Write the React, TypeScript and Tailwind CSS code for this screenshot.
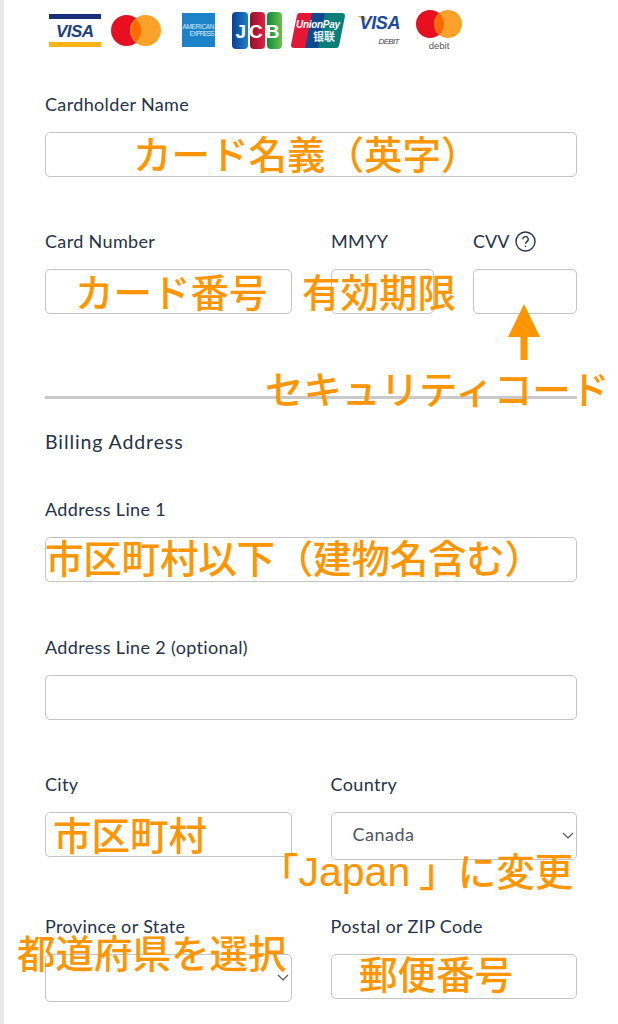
const labelFont = "font-['Lato','Noto_Sans',sans-serif]";
const noteFont = "font-['Noto_Sans_CJK_JP','Noto_Sans',sans-serif]";

function Label({ children }: { children: React.ReactNode }) {
  return <label className={`block h-[24px] text-[18px] leading-[24px] tracking-[0.35px] text-[#24324a] ${labelFont}`}>{children}</label>;
}

function Field({ label, className = '' }: { label: React.ReactNode; className?: string }) {
  return (
    <div className={className}>
      <Label>{label}</Label>
      <input type="text" className="mt-[16px] block h-[45px] w-full rounded-[5px] border border-[#c4c4c4] bg-white" />
    </div>
  );
}

function SelectField({ label, value }: { label: string; value?: string }) {
  return (
    <div>
      <Label>{label}</Label>
      <div className="relative mt-[16px] flex h-[48px] w-full items-center rounded-[5px] border border-[#c4c4c4] bg-white pb-[4px] pl-[21px]">
        <span className={`text-[18px] tracking-[0.5px] text-[#4b5563] ${labelFont}`}>{value}</span>
        <svg className="absolute right-[2px] top-[19px]" width="12" height="8" viewBox="0 0 12 8" fill="none" stroke="#555" strokeWidth="1.2">
          <path d="M1 1l5 5 5-5" />
        </svg>
      </div>
    </div>
  );
}

function Note({ children, className }: { children: React.ReactNode; className: string }) {
  return <span className={`absolute whitespace-nowrap text-[38.5px] leading-[44px] font-medium text-[#ff9500] ${noteFont} ${className}`}>{children}</span>;
}

function VisaLogo() {
  return (
    <svg width="52" height="33" viewBox="0 0 52 33">
      <rect width="52" height="5" fill="#1a2f7a" />
      <rect y="28" width="52" height="5" fill="#fbb416" />
      <text x="26" y="23" textAnchor="middle" fontFamily="Liberation Sans" fontWeight="700" fontStyle="italic" fontSize="17" textLength="38" fill="#1c3f7c">VISA</text>
    </svg>
  );
}

function McLogo() {
  return (
    <svg width="50" height="31" viewBox="0 0 50 31">
      <circle cx="15.5" cy="15.5" r="15.5" fill="#e80f20" />
      <circle cx="34.5" cy="15.5" r="15.5" fill="#fca22b" />
      <path d="M25 4a15.5 15.5 0 0 1 0 23a15.5 15.5 0 0 1 0-23z" fill="#ff6a00" />
    </svg>
  );
}

function McDebitLogo() {
  return (
    <svg width="46" height="40" viewBox="0 0 46 40">
      <circle cx="14" cy="14" r="14" fill="#e80f20" />
      <circle cx="32" cy="14" r="14" fill="#fca22b" />
      <path d="M23 3.2a14 14 0 0 1 0 21.6a14 14 0 0 1 0-21.6z" fill="#ff6a00" />
      <text x="23" y="38.5" textAnchor="middle" fontFamily="Liberation Sans" fontSize="9.5" fill="#555">debit</text>
    </svg>
  );
}

function AmexLogo() {
  return (
    <svg width="33" height="34" viewBox="0 0 33 34">
      <rect width="33" height="34" fill="#1d82c8" />
      <text x="16.5" y="16" textAnchor="middle" fontFamily="Liberation Sans" fontSize="6.5" textLength="32" fill="#d8edf9">AMERICAN</text>
      <text x="20" y="23" textAnchor="middle" fontFamily="Liberation Sans" fontSize="6.5" textLength="25" fill="#d8edf9">EXPRESS</text>
    </svg>
  );
}

function JcbLogo() {
  return (
    <svg width="50" height="37" viewBox="0 0 50 37">
      <defs>
        <linearGradient id="jcb-blue" x1="0" x2="1" y1="0" y2="0">
          <stop offset="0" stopColor="#0b3f96" />
          <stop offset="1" stopColor="#1e7fc4" />
        </linearGradient>
        <linearGradient id="jcb-red" x1="0" x2="1" y1="0" y2="0">
          <stop offset="0" stopColor="#8f1030" />
          <stop offset="1" stopColor="#e4203c" />
        </linearGradient>
        <linearGradient id="jcb-green" x1="0" x2="1" y1="0" y2="0">
          <stop offset="0" stopColor="#0e8a3c" />
          <stop offset="1" stopColor="#6cc04a" />
        </linearGradient>
      </defs>
      <rect width="16" height="37" rx="4" fill="url(#jcb-blue)" />
      <rect x="18" width="15" height="37" rx="4" fill="url(#jcb-red)" />
      <rect x="35" width="15" height="37" rx="4" fill="url(#jcb-green)" />
      <text x="25.5" y="26" textAnchor="middle" fontFamily="Liberation Sans" fontWeight="700" fontSize="19" textLength="44" fill="#fff">JCB</text>
    </svg>
  );
}

function UnionPayLogo() {
  return (
    <svg width="54" height="35" viewBox="0 0 54 35">
      <path d="M9 0h20l-7 35H3a3 3 0 0 1-3-3L6 2a3 3 0 0 1 3-2z" fill="#e31837" />
      <path d="M21 0h20l-7 35H14z" fill="#0b4a8f" />
      <path d="M34 0h17a3 3 0 0 1 3 3l-6 30a3 3 0 0 1-3 2H27z" fill="#0a7f7a" />
      <text x="27" y="15" textAnchor="middle" fontFamily="Liberation Sans" fontWeight="700" fontStyle="italic" fontSize="10" textLength="44" fill="#fff">UnionPay</text>
      <text x="33" y="28" textAnchor="middle" fontFamily="Noto Sans CJK SC" fontWeight="700" fontSize="11" fill="#e6f2f5">银联</text>
    </svg>
  );
}

function VisaDebitLogo() {
  return (
    <svg width="44" height="33" viewBox="0 0 44 33">
      <path d="M0 2h7l3 5z" fill="#f5a623" />
      <text x="23" y="15" textAnchor="middle" fontFamily="Liberation Sans" fontWeight="700" fontStyle="italic" fontSize="18" textLength="41" fill="#1a4a9c">VISA</text>
      <text x="32" y="30" textAnchor="middle" fontFamily="Liberation Sans" fontStyle="italic" fontSize="8" textLength="21" fill="#444">DEBIT</text>
    </svg>
  );
}

export default function App() {
  return (
    <div className="relative h-[1024px] w-[618px] overflow-hidden border-l-4 border-[#e8e8e8] bg-white">
      <div className="ml-[41px] w-[532px] pt-[10px]">
        <div className="flex h-[40px] items-center pl-[4px]">
          <VisaLogo />
          <div className="ml-[10px]"><McLogo /></div>
          <div className="ml-[21px]"><AmexLogo /></div>
          <div className="ml-[17px]"><JcbLogo /></div>
          <div className="ml-[9px]"><UnionPayLogo /></div>
          <div className="ml-[12px]"><VisaDebitLogo /></div>
          <div className="ml-[15px]"><McDebitLogo /></div>
        </div>

        <Field label="Cardholder Name" className="mt-[42px]" />

        <div className="mt-[52px] grid grid-cols-[247px_103px_104px] gap-x-[39px]">
          <Field label="Card Number" />
          <Field label="MMYY" />
          <Field
            label={
              <span className="flex items-center gap-[6px] tracking-normal">
                CVV
                <svg width="21" height="21" viewBox="0 0 21 21" fill="none" stroke="#24324a" strokeWidth="1.4">
                  <circle cx="10.5" cy="10.5" r="9.5" />
                  <path d="M7.8 8.2a2.7 2.7 0 1 1 4 2.4c-.9.6-1.3 1.1-1.3 2.1" />
                  <path d="M10.5 14.6v1.4" />
                </svg>
              </span>
            }
          />
        </div>

        <hr className="mt-[82px] h-[3px] border-0 bg-[#c9c9c9]" />

        <div className={`mt-[31px] h-[24px] text-[19.5px] leading-[24px] tracking-[0.9px] text-[#24324a] ${labelFont}`}>Billing Address</div>

        <Field label="Address Line 1" className="mt-[43px]" />
        <Field label="Address Line 2 (optional)" className="mt-[53px]" />

        <div className="mt-[52px] grid grid-cols-2 gap-x-[39px]">
          <Field label="City" />
          <SelectField label="Country" value="Canada" />
        </div>

        <div className="mt-[54px] grid grid-cols-2 gap-x-[39px]">
          <SelectField label="Province or State" />
          <Field label="Postal or ZIP Code" />
        </div>
      </div>

      {/* 注釈 */}
      <Note className="left-[129px] top-[130px]">カード名義（英字）</Note>
      <Note className="left-[71px] top-[268px]">カード番号</Note>
      <Note className="left-[298px] top-[268px]">有効期限</Note>
      <Note className="left-[261px] top-[365px]">セキュリティコード</Note>
      <Note className="left-[41px] top-[534px] tracking-[-0.2px]">市区町村以下（建物名含む）</Note>
      <Note className="left-[49px] top-[811px]">市区町村</Note>
      <Note className="left-[256px] top-[847px]">
        「<span className="mr-[9px] text-[41px] font-normal font-['Liberation_Sans']">Japan</span>」に変更
      </Note>
      <Note className="left-[13px] top-[929px]">都道府県を選択</Note>
      <Note className="left-[355px] top-[950px]">郵便番号</Note>
      <svg className="absolute left-[504px] top-[304px]" width="32" height="56" viewBox="0 0 32 56" fill="#ff9500">
        <path d="M16 0L32 33H19.5V56H12.5V33H0z" />
      </svg>
    </div>
  );
}
